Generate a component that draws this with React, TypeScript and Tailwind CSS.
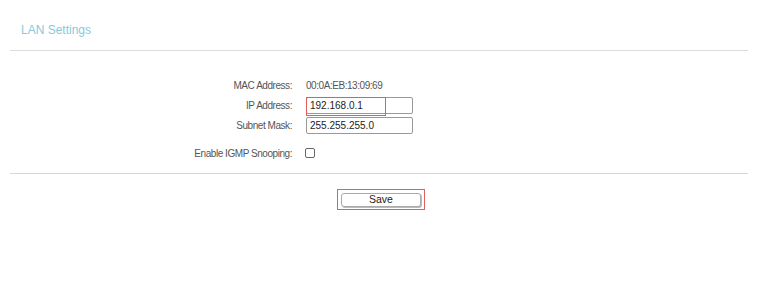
const label = "w-[292px] text-right text-[10px] tracking-[-0.45px] text-[#555]";
const field =
  "block w-[107px] h-[17px] border border-[#999] rounded-[2px] px-[3px] text-[10px] text-[#222] outline-none";

export default function App() {
  return (
    <div className="w-[771px] h-[294px] bg-white font-['Liberation_Sans',Arial,sans-serif] overflow-hidden">
      <div className="pl-[21px] pt-[21px] h-[50px] text-[12px] text-[#86cadb]">LAN Settings</div>
      <div className="ml-[10px] w-[738px] border-t border-[#dcdcdc]" />

      <div className="pt-[27px] flex flex-col">
        <div className="flex items-center h-[15px]">
          <div className={label}>MAC Address:</div>
          <div className="pl-[14px] text-[10px] tracking-[-0.45px] text-[#555]">00:0A:EB:13:09:69</div>
        </div>
        <div className="flex items-center h-[20px] mt-[2px]">
          <div className={label}>IP Address:</div>
          <div className="ml-[14px] relative flex">
            <input readOnly value="192.168.0.1" className={field} />
            <div className="absolute z-10 left-0 top-0 w-[80px] h-[19px] border border-[#e25c5c] pointer-events-none" />
          </div>
        </div>
        <div className="flex items-center h-[20px]">
          <div className={label}>Subnet Mask:</div>
          <input readOnly value="255.255.255.0" className={"ml-[14px] " + field} />
        </div>
        <div className="flex items-center h-[20px] mt-[8px]">
          <div className={label}>Enable IGMP Snooping:</div>
          <div className="ml-[13px] w-[10px] h-[10px] border border-[#666] rounded-[2px]" />
        </div>
      </div>

      <div className="ml-[10px] mt-[10px] w-[738px] border-t border-[#d8d8d8]" />

      <div className="flex pl-[337px] pt-[15px]">
        <div className="w-[88px] h-[21px] border border-[#e06060] flex items-center justify-center">
          <button className="w-[80px] h-[14px] border border-[#aaa] rounded-[3px] bg-white text-[10.5px] text-[#222] leading-none shadow-[1px_1px_0_#bbb]">
            Save
          </button>
        </div>
      </div>
    </div>
  );
}
